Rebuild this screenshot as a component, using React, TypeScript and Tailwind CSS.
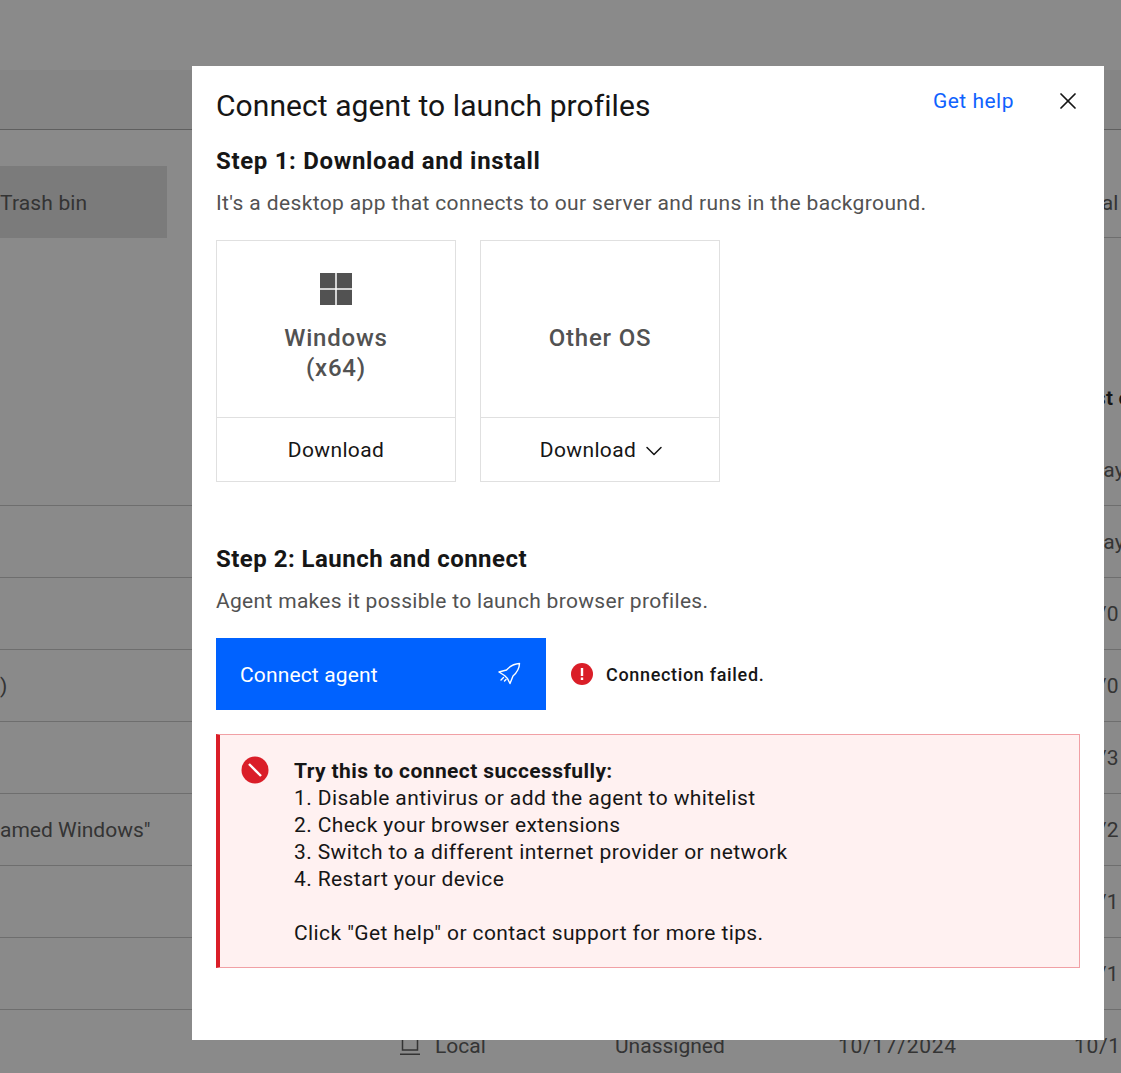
import { ChevronDown, X } from "lucide-react";
import type { ReactNode } from "react";

const rows = [
  { name: "", last: "1 day" },
  { name: "", last: "1 day" },
  { name: "", last: "10/0" },
  { name: ")", last: "10/0" },
  { name: "", last: "10/3" },
  { name: 'amed Windows"', last: "10/2" },
  { name: "", last: "10/1" },
  { name: "", last: "10/1" },
];

const RocketIcon = () => (
  <svg width="24" height="24" viewBox="0 0 24 24" fill="none" stroke="white" strokeWidth={1.4} strokeLinejoin="round">
    <path d="M21.500 1.500c-5.500.2-9.500 2.500-13 6.500L1 10l5.500 3.500 3 3L12 21.500l3-7.500c4-3.500 6.300-7 6.500-12.500z" />
    <path d="M5.500 15.500L3 18M8 17.500l-1.500 1.500" strokeLinecap="round" />
  </svg>
);

const LocalIcon = () => (
  <svg className="shrink-0" width="20" height="20" viewBox="0 0 20 20" fill="none" stroke="#525252" strokeWidth={1.5}>
    <path d="M2.500 0v13h15V0M0 17.250h20" />
  </svg>
);

const Background = () => (
  <div className="h-[1073px] overflow-hidden bg-white text-[21px] tracking-[0.15px] text-[#525252]">
    <div className="h-[70px]" />
    <div className="h-[60px] border-b border-[#a8a8a8] bg-[#f4f4f4]" />
    <div className="mt-9 flex h-[72px]">
      <div className="flex w-[167px] items-center bg-[#e0e0e0] pt-1">
        <span>Trash bin</span>
      </div>
      <div className="ml-auto flex w-[62px] items-center border-b border-[#c6c6c6] pl-2 pt-1">Local</div>
    </div>
    <div className="mt-[124px] flex h-[72px] justify-end">
      <span className="w-[49px] whitespace-nowrap pt-[21px] font-semibold text-[#161616]">Last o</span>
    </div>
    {rows.map((row, i) => (
      <div key={i} className="flex h-[72px] items-center border-b border-[#c6c6c6] pt-[3px]">
        <span className="w-[150px] whitespace-nowrap tracking-normal">{row.name}</span>
        <span className="ml-auto w-[47px] whitespace-nowrap">{row.last}</span>
      </div>
    ))}
    <div className="flex h-[72px] items-center pt-0.5 tracking-normal">
      <span className="ml-[400px] shrink-0">
        <LocalIcon />
      </span>
      <span className="ml-[15px] w-[180px] shrink-0">Local</span>
      <span className="w-[223px] shrink-0">Unassigned</span>
      <span className="w-[236px] shrink-0 tracking-[0.7px]">10/17/2024</span>
      <span className="shrink-0 whitespace-nowrap tracking-[0.7px]">10/1</span>
    </div>
  </div>
);

const DownloadCard = ({ children, action }: { children: ReactNode; action: ReactNode }) => (
  <div className="w-[240px] border border-[#e0e0e0]">
    <div className="flex h-[177px] flex-col items-center justify-start border-b border-[#e0e0e0] text-center">
      {children}
    </div>
    <div className="flex h-[63px] items-center justify-center pt-0.5 text-[#161616]">{action}</div>
  </div>
);

export default function App() {
  return (
    <div className="relative h-[1073px] overflow-hidden font-['Roboto',sans-serif] text-[#161616]">
      <Background />
      <div className="absolute inset-0 bg-[#161616]/50" />

      {/* Modal */}
      <div className="absolute left-[192px] top-[66px] h-[974px] w-[912px] bg-white px-6 text-[21px] tracking-[0.37px]">
        <div className="flex h-[80px] items-start justify-between">
          <h1 className="mt-5 text-[30px] leading-10 tracking-[0.07px]">Connect agent to launch profiles</h1>
          <div className="-mr-0.5 flex items-center">
            <a className="mt-[21px] leading-7 tracking-[0.5px] text-[#0f62fe]">Get help</a>
            <X className="ml-10 mt-[21px] h-7 w-7" strokeWidth={1.5} />
          </div>
        </div>

        <h2 className="text-[24px] font-bold leading-[30px] tracking-[0.67px]">Step 1: Download and install</h2>
        <p className="mt-[12px] leading-[30px] text-[#525252]">
          It's a desktop app that connects to our server and runs in the background.
        </p>

        <div className="mt-[22px] flex gap-6">
          <DownloadCard action={<span>Download</span>}>
            <svg className="mt-8" width="32" height="32" viewBox="0 0 32 32" fill="#525252">
              <path d="M0 0h15.250v15.250H0zM16.750 0H32v15.250H16.750zM0 16.750h15.250V32H0zM16.750 16.750H32V32H16.750z" />
            </svg>
            <div className="mt-[18px] text-[24px] font-medium leading-[30px] tracking-[0.8px] text-[#525252]">
              Windows
              <br />
              (x64)
            </div>
          </DownloadCard>
          <DownloadCard
            action={
              <div className="flex items-center pl-2">
                <span>Download</span>
                <ChevronDown className="ml-1 h-7 w-7" strokeWidth={1.3} />
              </div>
            }
          >
            <div className="mt-[82px] text-[24px] font-medium leading-[30px] tracking-[0.8px] text-[#525252]">
              Other OS
            </div>
          </DownloadCard>
        </div>

        <h2 className="mt-[62px] text-[24px] font-bold leading-[30px] tracking-[0.47px]">Step 2: Launch and connect</h2>
        <p className="mt-[12px] leading-[30px] tracking-[0.31px] text-[#525252]">
          Agent makes it possible to launch browser profiles.
        </p>

        <div className="mt-[22px] flex items-center">
          <button className="flex h-[72px] w-[330px] items-center justify-between bg-[#0062ff] pl-6 pr-6 tracking-[0.15px] text-white">
            <span className="pt-1">Connect agent</span>
            <RocketIcon />
          </button>
          <svg className="ml-6" width="24" height="24" viewBox="0 0 24 24">
            <circle cx="12" cy="12" r="11" fill="#da1e28" />
            <path d="M10.800 6h2.400v8h-2.400zM10.800 15.500h2.400v2.500h-2.400z" fill="white" />
          </svg>
          <span className="ml-3 text-[18px] font-medium tracking-[0.67px]">Connection failed.</span>
        </div>

        <div className="mt-6 flex h-[234px] w-[864px] border border-l-4 border-[#f1a0a5] border-l-[#da1e28] bg-[#fff1f1] leading-[27px] tracking-[0.4px]">
          <svg className="ml-[21px] mt-[21px] shrink-0" width="28" height="28" viewBox="0 0 28 28">
            <circle cx="14" cy="14" r="13.500" fill="#da1e28" />
            <path d="M8 8l12 12" stroke="white" strokeWidth={2.4} />
          </svg>
          <div className="ml-[25px] mt-[23px]">
            <div className="font-bold">Try this to connect successfully:</div>
            <div>1. Disable antivirus or add the agent to whitelist</div>
            <div>2. Check your browser extensions</div>
            <div>3. Switch to a different internet provider or network</div>
            <div>4. Restart your device</div>
            <div className="mt-[27px]">Click "Get help" or contact support for more tips.</div>
          </div>
        </div>
      </div>
    </div>
  );
}
